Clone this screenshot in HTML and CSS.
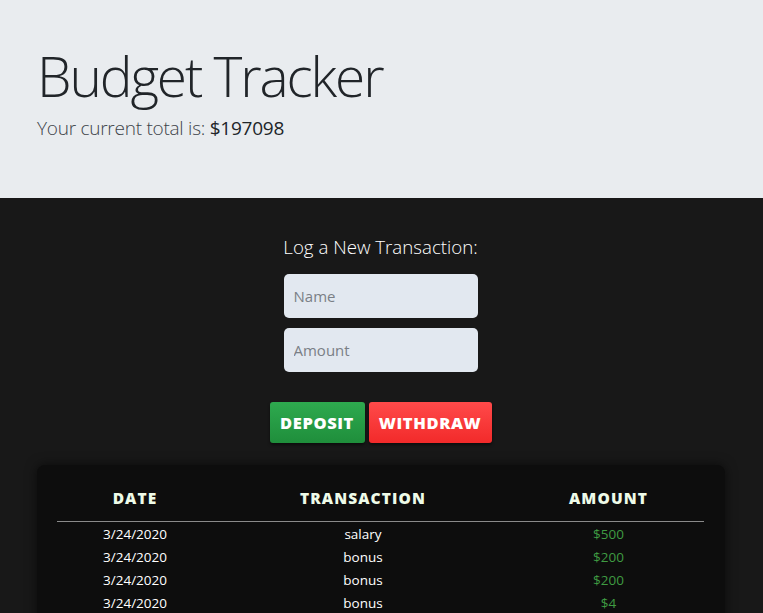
FILE: index.html
```html
<!DOCTYPE html>
<html lang="en">
<head>
<meta charset="utf-8">
<title>Budget Tracker</title>
<link rel="stylesheet" href="styles.css">
</head>
<body>
<header class="jumbotron">
  <h1 class="title">Budget Tracker</h1>
  <p class="lead">Your current total is: <span class="total">$197098</span></p>
</header>
<main class="main">
  <section class="form">
    <h2 class="form-title">Log a New Transaction:</h2>
    <input class="field" type="text" placeholder="Name">
    <input class="field" type="number" placeholder="Amount">
    <div class="buttons">
      <button class="btn btn-add">Deposit</button>
      <button class="btn btn-sub">Withdraw</button>
    </div>
  </section>
  <section class="card">
    <div class="table">
      <div class="th">Date</div>
      <div class="th">Transaction</div>
      <div class="th">Amount</div>
      <div class="rule"></div>
      <div class="td">3/24/2020</div><div class="td">salary</div><div class="td amt">$500</div>
      <div class="td">3/24/2020</div><div class="td">bonus</div><div class="td amt">$200</div>
      <div class="td">3/24/2020</div><div class="td">bonus</div><div class="td amt">$200</div>
      <div class="td">3/24/2020</div><div class="td">bonus</div><div class="td amt">$4</div>
    </div>
  </section>
</main>
</body>
</html>
```

FILE: styles.css
```css
* { box-sizing: border-box; }
html, body { margin: 0; padding: 0; }
body {
  background: #181818;
  font-family: "Open Sans", "Noto Sans", sans-serif;
  color: #212529;
  height: 613px;
  overflow: hidden;
}
.jumbotron {
  background: #e9ecef;
  height: 198px;
  padding: 42px 37px 0;
}
.title {
  margin: 0;
  font-size: 55px;
  font-weight: 300;
  line-height: 67px;
  letter-spacing: -2.1px;
  color: #212529;
}
.lead {
  margin: 4px 0 0;
  font-size: 19px;
  font-weight: 300;
  line-height: 30px;
  letter-spacing: -0.25px;
  color: #3d4349;
}
.total { font-weight: 400; color: #212529; }
.main { padding-top: 34px; }
.form {
  display: flex;
  flex-direction: column;
  align-items: center;
  padding-right: 2px;
}
.form-title {
  margin: 0 0 12px;
  font-size: 18.7px;
  font-weight: 300;
  line-height: 30px;
  color: #fff;
}
.field {
  width: 194px;
  height: 44px;
  margin: 0 0 10px;
  border: none;
  border-radius: 5px;
  background: #e2e8f0;
  padding: 0 10px;
  font-family: "Open Sans", sans-serif;
  font-size: 15px;
  color: #333;
  outline: none;
}
.field::placeholder { color: #7a7f86; }
.buttons {
  display: flex;
  gap: 4px;
  margin-top: 20px;
}
.btn {
  height: 41px;
  border: none;
  border-radius: 3px;
  padding: 0;
  font-family: "Open Sans", sans-serif;
  font-weight: 800;
  font-size: 16.5px;
  letter-spacing: 0.6px;
  text-transform: uppercase;
  color: #fff;
  box-shadow: 0 2px 3px rgba(0,0,0,0.5);
}
.btn-add { background: linear-gradient(#2eaa4f, #1f8e3b); width: 95px; }
.btn-sub { background: linear-gradient(#ff4a4a, #f22a2a); width: 123px; }
.card {
  margin: 22px 38px 0 37px;
  background: #0d0d0d;
  border-radius: 8px;
  box-shadow: 0 0 12px rgba(0,0,0,0.6);
  padding: 0 21px 20px 20px;
}
.table {
  display: grid;
  grid-template-columns: 156px 300px 1fr;
  text-align: center;
}
.th {
  padding: 23px 0 13px;
  line-height: 20px;
  font-weight: 800;
  font-size: 15.5px;
  letter-spacing: 1.1px;
  text-transform: uppercase;
  color: #eefbe8;
}
.rule {
  grid-column: 1 / -1;
  height: 1px;
  background: #8a8a8a;
}
.td {
  font-size: 13.5px;
  line-height: 23px;
  color: #fff;
  padding-top: 1px;
  margin-bottom: -1px;
}
.amt { color: #3f9b42; }
```
